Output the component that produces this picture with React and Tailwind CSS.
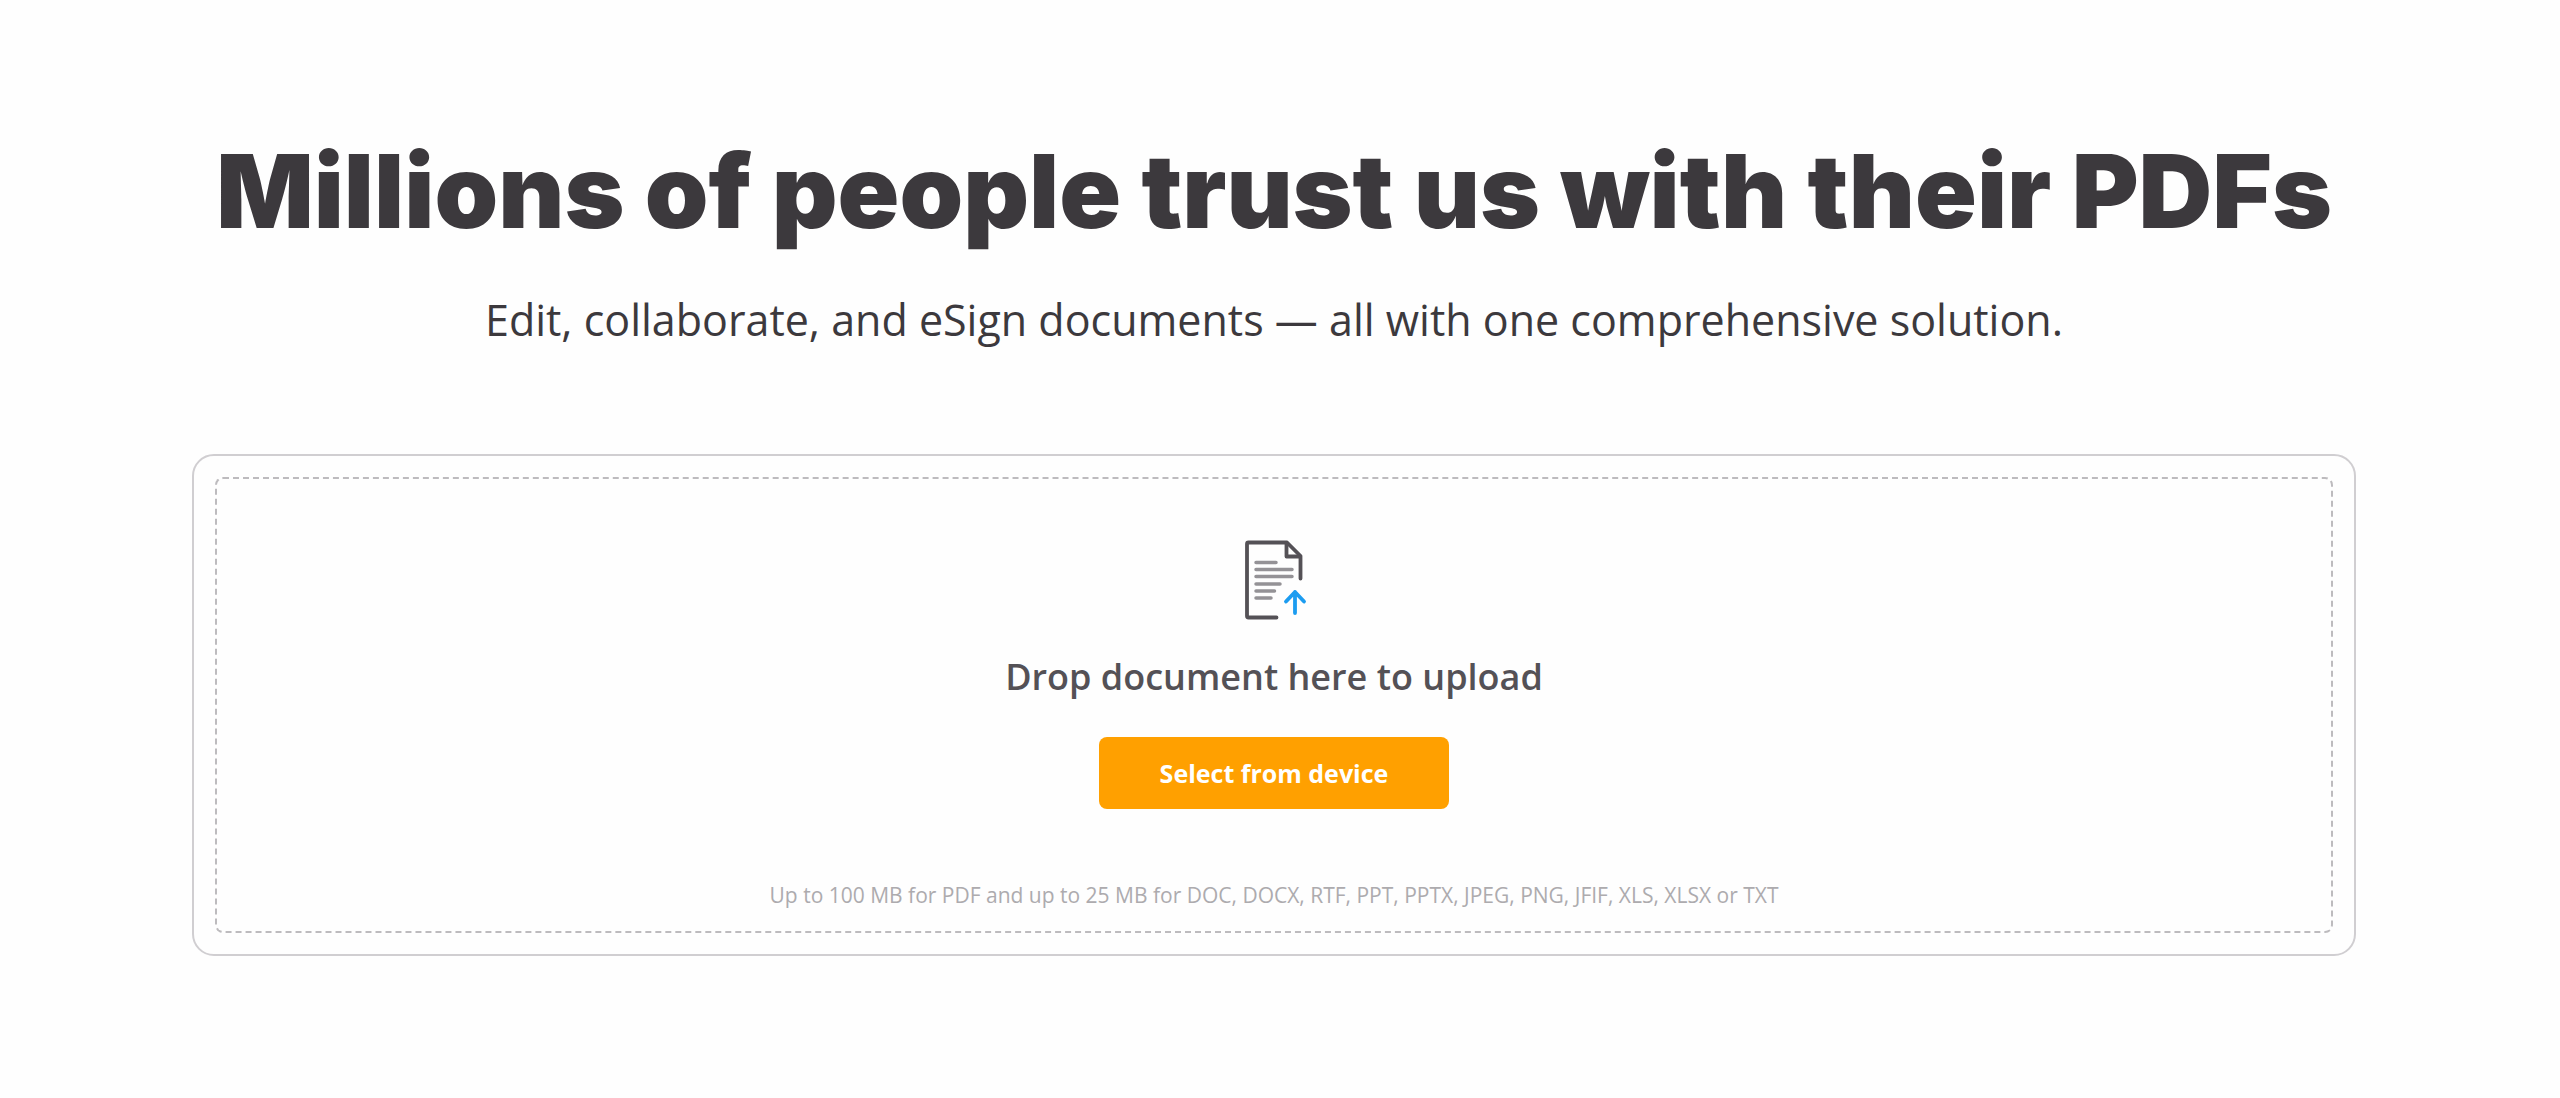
import React, { useRef, useState } from 'react';

const UploadIcon = () => (
  <svg width="66" height="82" viewBox="1 1 66 82" fill="none" strokeLinecap="round" strokeLinejoin="round" aria-hidden="true">
    <path d="M36.5 79.5H8.5a1.5 1.5 0 0 1-1.5-1.5V6a1.5 1.5 0 0 1 1.5-1.5H47L60.5 18v22.5" stroke="#545156" strokeWidth="3.8" />
    <path d="M46.5 5v13.5h13.5" stroke="#545156" strokeWidth="3.8" />
    <path d="M16 24.5h20M16 31.5h36M16 38.5h36M16 46h24M16 53h18.5M16 60h15" stroke="#949296" strokeWidth="3.5" />
    <path d="M55 75V54M46 63.5l9-9.5 9 9.5" stroke="#1c9cf0" strokeWidth="3.8" />
  </svg>
);

const App = () => {
  const fileInput = useRef(null);
  const [dragging, setDragging] = useState(false);

  const handleDrop = (e) => {
    e.preventDefault();
    setDragging(false);
    fileInput.current.files = e.dataTransfer.files;
  };

  return (
    <main className="min-h-screen bg-[#fefefe] pt-[140px] pr-[204px] pb-36 pl-48 text-center font-['Open_Sans',sans-serif] text-[#3c393d]">
      <h1 className="font-['Inter',sans-serif] text-[102px] leading-[102px] font-black">
        Millions of people trust us with their PDFs
      </h1>
      <p className="mt-[50px] text-[43px] leading-[56px]">
        Edit, collaborate, and eSign documents — all with one comprehensive solution.
      </p>

      <section className="mt-[106px] rounded-[22px] border-2 border-[#d0ced1] p-[21px]">
        <div
          className={`flex flex-col items-center rounded-lg border-2 border-dashed pt-[60px] pb-5 ${dragging ? 'border-[#1c9cf0]' : 'border-[#bdbbbe]'}`}
          onDragOver={(e) => { e.preventDefault(); setDragging(true); }}
          onDragLeave={() => setDragging(false)}
          onDrop={handleDrop}
        >
          <UploadIcon />
          <h2 className="mt-8 text-[36px] leading-[48px] font-semibold text-[#545156]">
            Drop document here to upload
          </h2>
          <input ref={fileInput} type="file" className="hidden" aria-label="Document" />
          <button
            type="button"
            onClick={() => fileInput.current.click()}
            className="mt-9 h-[72px] w-[350px] rounded-lg bg-[#ffa000] text-[25px] leading-8 font-bold text-white"
          >
            Select from device
          </button>
          <p className="mt-[70px] text-[21px] leading-8 text-[#adabae]">
            Up to 100 MB for PDF and up to 25 MB for DOC, DOCX, RTF, PPT, PPTX, JPEG, PNG, JFIF, XLS, XLSX or TXT
          </p>
        </div>
      </section>
    </main>
  );
};

export default App;
